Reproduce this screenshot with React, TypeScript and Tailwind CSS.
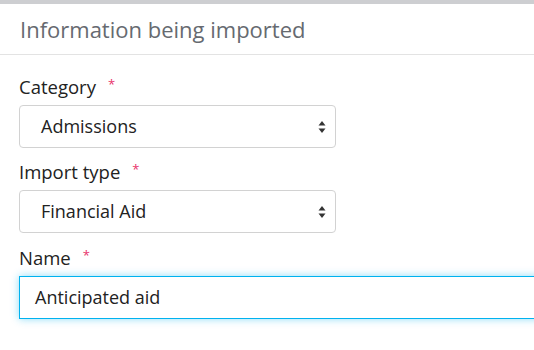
import React from "react";

const font = { fontFamily: '"Open Sans", "Noto Sans", Arial, sans-serif' };

function Arrows() {
  return (
    <svg width="8" height="14" viewBox="0 0 8 14" className="absolute right-[9px] top-1/2 -translate-y-1/2">
      <path d="M4 1 L7.5 5.5 L0.5 5.5 Z" fill="#333" />
      <path d="M4 13 L7.5 8.5 L0.5 8.5 Z" fill="#333" />
    </svg>
  );
}

function Label({ children }: { children: React.ReactNode }) {
  return (
    <div className="text-[18.5px] leading-[24px] text-[#222] mb-[6px] flex items-start">
      <span>{children}</span>
      <span className="text-[#e8336b] text-[13px] leading-[18px] ml-[12px]">*</span>
    </div>
  );
}

function Select({ value }: { value: string }) {
  return (
    <div className="relative w-[317px] h-[43px] border border-[#d2d2d2] rounded-[4px] bg-white flex items-center pl-[21px] text-[18px] text-[#222]">
      {value}
      <Arrows />
    </div>
  );
}

export default function App() {
  return (
    <div className="w-[534px] h-[350px] bg-white overflow-hidden" style={font}>
      <div className="h-[4px] bg-[#cdced1]" />
      <div className="h-[51px] border-b border-[#e3e3e3] flex items-center pl-[20px] text-[22px] text-[#666a70]">
        Information being imported
      </div>
      <div className="pl-[19px] pt-[20px]">
        <div className="mb-[12px]">
          <Label>Category</Label>
          <Select value="Admissions" />
        </div>
        <div className="mb-[13px]">
          <Label>Import type</Label>
          <Select value="Financial Aid" />
        </div>
        <div>
          <Label>Name</Label>
          <div className="w-[560px] h-[43px] border-[1.5px] border-[#00b2ef] bg-white flex items-center pl-[15px] text-[18px] text-[#222] shadow-[0_0_8px_rgba(0,178,239,0.45)]">
            Anticipated aid
          </div>
        </div>
      </div>
    </div>
  );
}
